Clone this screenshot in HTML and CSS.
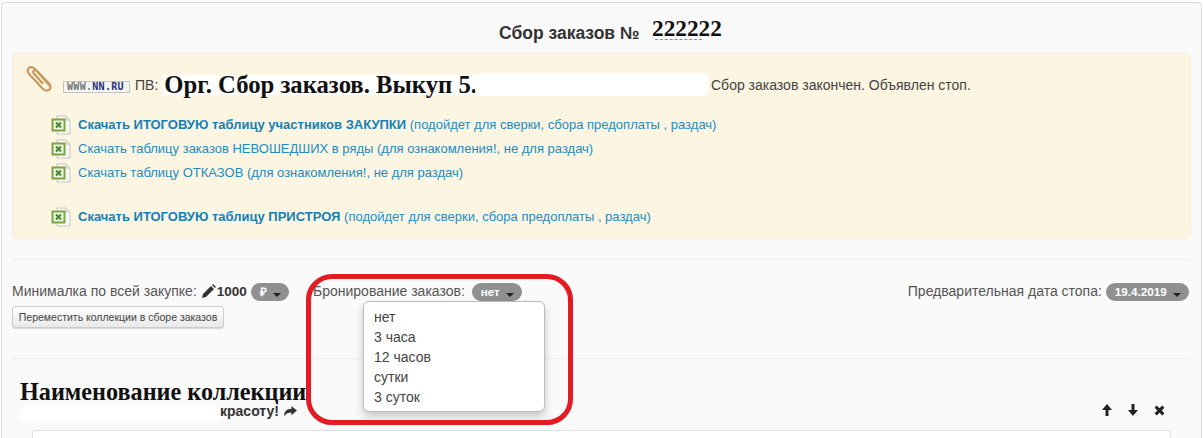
FILE: index.html
```html
<!DOCTYPE html>
<html lang="ru">
<head>
  <meta charset="UTF-8">
  <title>Сбор заказов</title>
  <link rel="stylesheet" href="styles.css">
</head>

<body>
  <svg width="0" height="0" class="defs">
    <symbol id="xls" viewBox="0 0 20 20">
      <path d="M6 1h9l4 4v14H6z" fill="#f6f6f2" stroke="#c9c9c4"/>
      <path d="M15 1v4h4" fill="#e8e8e4" stroke="#c9c9c4"/>
      <rect x="1.500" y="4.500" width="12" height="11" fill="#eef5df" stroke="#7da344" stroke-width="2"/>
      <path d="M5 7.500l5 5M10 7.500l-5 5" stroke="#3f8a2e" stroke-width="2"/>
    </symbol>
    <symbol id="caret" viewBox="0 0 8 4"><path d="M0 0h8L4 4z" fill="#222"/></symbol>
  </svg>

  <div class="panel">
    <!-- ===== TITLE ===== -->
    <h2 class="title">Сбор заказов № <span class="title-num">222222</span></h2>

    <!-- ===== ALERT ===== -->
    <div class="alert">
      <svg class="clip" viewBox="0 0 28 28" width="28" height="28">
        <path d="M24 22 9 5C7 2.500 3.500 2.500 2.500 4.500 1 6.500 2 9 4 11l13 14c2 2 5 2 6.500.5 1.500-1.500 1-4-.5-6L11 7c-1-1-2.500-1-3.200-.2-.8.8-.6 2 .2 3l9 10" fill="none" stroke="#c79a5c" stroke-width="2.200"/>
      </svg>
      <div class="alert-head">
        <span class="site-logo"><span class="www">WWW.</span><span class="nn">NN.RU</span></span>
        <span class="pv">ПВ:</span>
        <span class="head-serif">Орг. Сбор заказов. Выкуп 5.</span>
        <span class="smudge smudge-head"></span>
        <span class="head-status">Сбор заказов закончен. Объявлен стоп.</span>
      </div>
      <ul class="files">
        <li><svg class="xls"><use href="#xls"/></svg><a href="#"><b>Скачать ИТОГОВУЮ таблицу участников ЗАКУПКИ</b> (подойдет для сверки, сбора предоплаты , раздач)</a></li>
        <li><svg class="xls"><use href="#xls"/></svg><a href="#">Скачать таблицу заказов НЕВОШЕДШИХ в ряды (для ознакомления!, не для раздач)</a></li>
        <li><svg class="xls"><use href="#xls"/></svg><a href="#">Скачать таблицу ОТКАЗОВ (для ознакомления!, не для раздач)</a></li>
        <li class="files-gap"><svg class="xls"><use href="#xls"/></svg><a href="#"><b>Скачать ИТОГОВУЮ таблицу ПРИСТРОЯ</b> (подойдет для сверки, сбора предоплаты , раздач)</a></li>
      </ul>
    </div>

    <hr class="line line-top">

    <!-- ===== SETTINGS ===== -->
    <div class="settings">
      <div class="set-left">
        <div class="set-row">Минималка по всей закупке:
          <svg class="pencil" viewBox="0 0 14 14" width="14" height="14"><path d="M0 14l1-4 8-8 3 3-8 8zM10 1l1-1 3 3-1 1z" fill="#333"/></svg><b class="min-val">1000</b>
          <span class="pill">₽ <svg class="caret"><use href="#caret"/></svg></span>
        </div>
        <button class="btn-move">Переместить коллекции в сборе заказов</button>
      </div>
      <div class="set-mid">
        <div class="set-row">Бронирование заказов:
          <span class="pill pill-gap">нет <svg class="caret"><use href="#caret"/></svg></span>
        </div>
        <ul class="menu">
          <li>нет</li>
          <li>3 часа</li>
          <li>12 часов</li>
          <li>сутки</li>
          <li>3 суток</li>
        </ul>
        <div class="red-frame"></div>
      </div>
      <div class="set-right">
        <div class="set-row">Предварительная дата стопа:
          <span class="pill">19.4.2019 <svg class="caret"><use href="#caret"/></svg></span>
        </div>
      </div>
    </div>

    <hr class="line">

    <!-- ===== COLLECTION ===== -->
    <div class="coll-head">
      <div class="coll-title">
        <h3 class="coll-name">Наименование коллекции</h3>
        <div class="coll-sub"><span class="smudge smudge-sub"></span><b>красоту!</b>
          <svg viewBox="0 0 14 12" width="13" height="11"><path d="M8 0l6 5-6 5V7C5 7 2 8 0 11c0-5 3-8 8-8z" fill="#333"/></svg>
        </div>
      </div>
      <div class="coll-tools">
        <svg viewBox="0 0 10 12" width="10" height="12"><path d="M5 0l5 6H6.500v6h-3V6H0z" fill="#222"/></svg>
        <svg viewBox="0 0 10 12" width="10" height="12"><path d="M5 12l5-6H6.500V0h-3v6H0z" fill="#222"/></svg>
        <svg viewBox="0 0 10 10" width="11" height="11"><path d="M1.500 1.500l7 7M8.500 1.500l-7 7" stroke="#222" stroke-width="2.800"/></svg>
      </div>
    </div>
    <div class="coll-card"></div>
  </div>
</body>
</html>
```

FILE: styles.css
```css
html, body {
  margin: 0; padding: 0;
  height: 438px;
  overflow: hidden;
  background: #fff;
  font: 14px/20px "Liberation Sans", Arial, sans-serif;
  color: #555;
}

.defs { position: absolute; }

/* ---------------- Panel ---------------- */
.panel {
  box-sizing: border-box;
  height: 436px;
  margin: 2px 1px 0;
  padding: 0 10px;
  background: #fafafa;
  border: 1px solid #ddd;
  border-bottom: 0;
  border-radius: 4px 4px 0 0;
  overflow: hidden;
}

.title {
  position: relative;
  margin: 0;
  height: 50px;
  padding-left: 487px;
  font: bold 17.500px/60px "Liberation Sans", Arial, sans-serif;
  color: #333;
}
.title-num {
  position: absolute;
  left: 640px; top: -5px;
  font: bold 23.300px/60px "Liberation Serif", serif;
  color: #111;
}
.title-num::before {
  content: "";
  position: absolute;
  z-index: -1;
  left: -5px; right: 4px; top: 22px; bottom: 15px;
  background: #fff;
}
/* what is left of the old number under the retouch */
.title-num::after {
  content: "";
  position: absolute;
  left: 3px; right: 20px; top: 41px;
  border-top: 1px dashed #889;
}

/* ---------------- Alert ---------------- */
.alert {
  position: relative;
  box-sizing: border-box;
  height: 186px;
  padding: 20px 0 0 38px;
  background: #fcf5e2;
  border: 1px solid #f7efdc;
  border-radius: 4px;
}
.clip { position: absolute; left: 13px; top: 10px; }

.alert-head {
  position: relative;
  display: flex;
  align-items: center;
  height: 22px;
  margin-left: 12px;
}
.site-logo {
  display: inline-block;
  box-sizing: border-box;
  width: 67px; height: 12px;
  margin-top: 3px;
  padding-left: 3px;
  background: #f4f4f0;
  border: 1px solid #c4c4c4;
  font: bold 10px/10px "DejaVu Sans Mono", monospace;
  letter-spacing: 0.300px;
  white-space: nowrap;
}
.www { color: #777; }
.nn { color: #1c2f7c; }
.pv { margin-left: 5px; color: #444; }
.head-serif {
  margin-left: 4px;
  padding-left: 2px;
  background: #fff;
  font: bold 24.700px/20px "Liberation Serif", serif;
  color: #111;
  white-space: nowrap;
}
.smudge { position: absolute; background: #fff; border-radius: 6px; }
.smudge-head { left: 412px; top: -1px; width: 234px; height: 23px; }
.head-status { position: absolute; left: 648px; top: 1px; white-space: nowrap; color: #444; }

.files { list-style: none; margin: 17px 0 0; padding: 0; font-size: 13px; }
.files li { display: flex; align-items: center; height: 24px; }
.files .files-gap { margin-top: 20px; }
.files a { color: #1d8cc0; text-decoration: none; white-space: pre; }
.files b { color: #1580b5; }
.xls { width: 20px; height: 20px; margin-right: 7px; }

/* ---------------- Lines ---------------- */
.line { height: 0; margin: 0; border: 0; border-top: 1px solid #ececec; }
.line-top { margin-top: 20px; }

/* ---------------- Settings ---------------- */
.settings {
  display: flex;
  height: 98px;
  box-sizing: border-box;
  padding: 20px 2px 0 0;
}
.set-left { width: 301px; }
.set-mid { position: relative; flex: 1; }
.set-row { height: 22px; line-height: 22px; white-space: nowrap; }
.pencil { vertical-align: -2px; margin-left: 1px; }
.min-val { margin-left: 1px; font-size: 13.500px; color: #333; }

.pill {
  display: inline-block;
  height: 18px;
  padding: 0 8px 0 9px;
  border-radius: 9px;
  background: #909090;
  color: #fff;
  font: bold 11.700px/18px "Liberation Sans", Arial, sans-serif;
}
.pill-gap { margin-left: 3px; }
.caret { width: 8px; height: 4px; margin-left: 3px; vertical-align: -1px; }

.btn-move {
  display: block;
  box-sizing: border-box;
  width: 212px; height: 22px;
  margin-top: 4px;
  padding: 0;
  background: linear-gradient(#fff, #e9e9e9);
  border: 1px solid #ccc;
  border-radius: 3px;
  box-shadow: 0 1px 1px rgba(0,0,0,0.15);
  font: 10.500px/18px "Liberation Sans", Arial, sans-serif;
  color: #444;
}

/* ---------------- Open dropdown ---------------- */
.menu {
  position: absolute;
  z-index: 2;
  left: 50px; top: 21px;
  box-sizing: border-box;
  width: 182px; height: 111px;
  margin: 0;
  padding: 5px 0 0 10px;
  list-style: none;
  background: #fff;
  border: 1px solid #bbb;
  border-radius: 6px;
  box-shadow: 0 5px 10px rgba(0,0,0,0.2);
  color: #444;
}

/* annotation drawn on top of the screenshot */
.red-frame {
  position: absolute;
  z-index: 3;
  left: -7px; top: -6px;
  box-sizing: border-box;
  width: 267px; height: 151px;
  border: 5px solid #e31b23;
  border-radius: 26px;
  pointer-events: none;
}

/* ---------------- Collection ---------------- */
.coll-head {
  display: flex;
  justify-content: space-between;
  height: 71px;
  padding-left: 8px;
}
.coll-name {
  margin: 20px 0 0;
  font: bold 24.200px/26px "Liberation Serif", serif;
  color: #111;
  white-space: nowrap;
}
.coll-sub {
  position: relative;
  height: 16px;
  margin-top: -2px;
  padding-left: 200px;
  line-height: 16px;
  color: #333;
  white-space: nowrap;
}
.coll-sub svg { vertical-align: -1px; margin-left: 1px; }
.smudge-sub { left: 0; top: 4px; width: 200px; height: 14px; }
.coll-tools {
  display: flex;
  align-items: center;
  gap: 16px;
  height: 14px;
  margin: 44px 26px 0 0;
}
.coll-card {
  box-sizing: border-box;
  height: 8px;
  margin: 0 20px;
  background: #fff;
  border: 1px solid #e2e2e2;
  border-bottom: 0;
  border-radius: 4px 4px 0 0;
}
```
